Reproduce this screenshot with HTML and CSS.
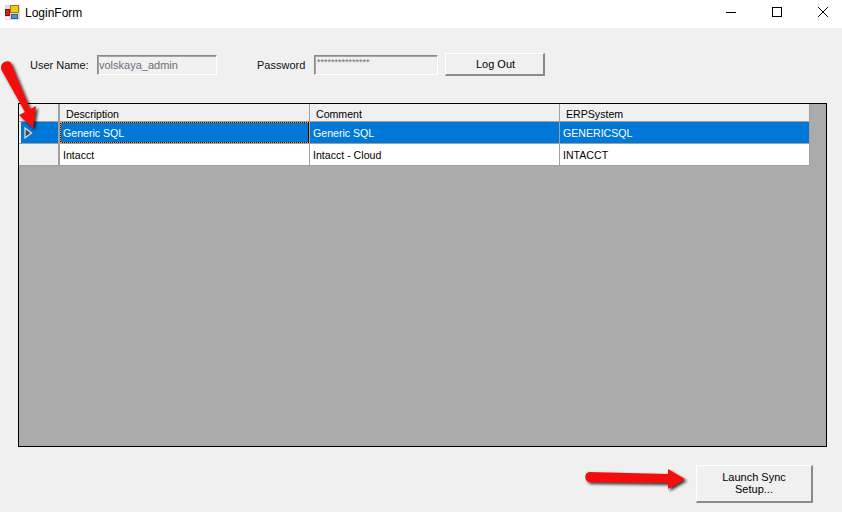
FILE: index.html
```html
<!DOCTYPE html>
<html lang="en">
<head>
<meta charset="utf-8">
<title>LoginForm</title>
<link rel="stylesheet" href="styles.css">
</head>
<body>
<div class="window">
  <header class="titlebar">
    <svg class="app-icon" width="15" height="15" viewBox="0 0 15 15">
      <rect x="0" y="0" width="15" height="15" fill="#dcdcdc"/>
      <rect x="5.5" y="0.5" width="8" height="7" fill="#f5c518" stroke="#a67c00"/>
      <rect x="0.5" y="4.5" width="4" height="6" fill="#d8231f" stroke="#7a1510"/>
      <rect x="6.5" y="9.5" width="6" height="4" fill="#4f8fdc" stroke="#2c5ea0"/>
      <rect x="1" y="12" width="3" height="2" fill="#fff"/>
    </svg>
    <span class="title">LoginForm</span>
    <div class="caption-buttons">
      <svg width="12" height="12" viewBox="0 0 12 12"><path d="M1 6.5H11" stroke="#000" fill="none"/></svg>
      <svg width="12" height="12" viewBox="0 0 12 12"><rect x="1.5" y="1.5" width="9" height="9" stroke="#000" fill="none"/></svg>
      <svg width="12" height="12" viewBox="0 0 12 12"><path d="M1 1L11 11M11 1L1 11" stroke="#000" fill="none"/></svg>
    </div>
  </header>

  <section class="login-row">
    <label class="lbl lbl-user">User Name:</label>
    <div class="field field-user">volskaya_admin</div>
    <label class="lbl lbl-pass">Password</label>
    <div class="field field-pass">***************</div>
    <button class="btn btn-logout">Log Out</button>
  </section>

  <section class="grid">
    <div class="row head">
      <div class="cell rowhead"></div>
      <div class="cell col"><span class="h-text">Description</span></div>
      <div class="cell col"><span class="h-text">Comment</span></div>
      <div class="cell col"><span class="h-text">ERPSystem</span></div>
    </div>
    <div class="row selected">
      <div class="cell rowhead">
        <svg width="9" height="12" viewBox="0 0 9 12"><path d="M1 1V11L7.5 6Z" fill="#3f4a55" stroke="#e4e4e4" stroke-width="1.2"/></svg>
      </div>
      <div class="cell col focus">Generic SQL</div>
      <div class="cell col">Generic SQL</div>
      <div class="cell col">GENERICSQL</div>
    </div>
    <div class="row">
      <div class="cell rowhead"></div>
      <div class="cell col">Intacct</div>
      <div class="cell col">Intacct - Cloud</div>
      <div class="cell col">INTACCT</div>
    </div>
  </section>

  <footer class="bottom">
    <button class="btn btn-launch">Launch Sync<br>Setup...</button>
  </footer>

  <svg class="arrow arrow-down" width="60" height="90" viewBox="0 0 60 90">
    <defs>
      <filter id="sh" x="-30%" y="-30%" width="170%" height="170%">
        <feDropShadow dx="2" dy="2" stdDeviation="1.8" flood-color="#000" flood-opacity=".8"/>
      </filter>
    </defs>
    <path d="M3 5C5 2 10 1 12 4L31 50L37 47L34 69L20 56L26 53L2 10C2 8 2 6 3 5Z" fill="#f40d0d" filter="url(#sh)"/>
  </svg>
  <svg class="arrow arrow-right" width="120" height="40" viewBox="0 0 120 40">
    <path d="M7 9L86 11V6L103 16L86 26V20L7 19C2 18 2 10 7 9Z" fill="#f40d0d" filter="url(#sh)"/>
  </svg>
</div>
</body>
</html>
```
FILE: styles.css
```css
* { box-sizing: border-box; }
html, body { margin: 0; padding: 0; }
body { width: 842px; height: 512px; overflow: hidden; background: #f0f0f0; font-family: "Liberation Sans", Arial, sans-serif; font-size: 11px; color: #000; }
.window { position: relative; width: 842px; height: 512px; display: flex; flex-direction: column; }

.titlebar { height: 28px; background: #fff; display: flex; align-items: center; padding-left: 5px; }
.app-icon { flex: none; margin-top: -3px; }
.title { margin-left: 5px; font-size: 12px; margin-top: -2px; }
.caption-buttons { margin-left: auto; display: flex; gap: 34px; padding-right: 13px; margin-top: -4px; }
.caption-buttons svg { display: block; }

.login-row { height: 75px; display: flex; align-items: flex-start; padding: 24px 0 0 30px; }
.lbl { line-height: 26px; height: 26px; color: #111; }
.lbl-user { width: 67px; }
.lbl-pass { width: 57px; margin-left: 40px; }
.field { height: 20px; margin-top: 3px; background: #f0f0f0; border: 1px solid #fff; border-top-color: #8a8a8a; border-left-color: #8a8a8a; box-shadow: inset 1px 1px 0 #a5a5a5; color: #6f6a78; line-height: 18px; padding-left: 1px; }
.field-user { width: 120px; }
.field-pass { width: 124px; font-size: 9px; line-height: 13px; padding-left: 2px; }
.btn { font-family: inherit; font-size: 11px; color: #000; background: #f0f0f0; border: 1px solid #fff; border-right: 2px solid #8a8a8a; border-bottom: 2px solid #8a8a8a; padding: 0 0 0 2px; }
.btn-logout { width: 100px; height: 23px; margin-left: 7px; margin-top: 1px; }

.grid { margin-left: 18px; width: 809px; height: 344px; background: #ababab; border: 1px solid #000; display: flex; flex-direction: column; align-items: flex-start; }
.row { display: flex; width: 791px; height: 22px; background: #fff; border-bottom: 1px solid #a0a0a0; font-size: 10.6px; flex: none; }
.cell { height: 100%; display: flex; align-items: center; line-height: 1; }
.rowhead { width: 41px; flex: none; background: #f0f0f0; border-right: 2px solid #a0a0a0; border-left: 1px solid #f0f0f0; padding-left: 4px; }
.col { width: 250px; flex: none; padding-left: 3px; padding-top: 2px; border-right: 1px solid #a0a0a0; }
.head { height: 18px; background: #f0f0f0; border-bottom: 1px solid #a0a0a0; }
.head .col { padding-left: 6px; padding-top: 3px; border-right: 1px solid #a0a0a0; }
.selected { background: #0078d7; color: #fff; }
.selected .rowhead { background: #0078d7; border-left-width: 2px; padding-left: 3px; }
.selected .focus { outline: 1px dotted #ff9a2e; outline-offset: -1px; box-shadow: inset 0 0 0 1px #111; }

.bottom { display: flex; justify-content: flex-end; padding: 18px 29px 0 0; }
.btn-launch { width: 117px; height: 38px; line-height: 12px; padding: 0 0 1px 0; }

.arrow { position: absolute; pointer-events: none; }
.arrow-down { left: -1px; top: 59px; }
.arrow-right { left: 582px; top: 463px; }
```
